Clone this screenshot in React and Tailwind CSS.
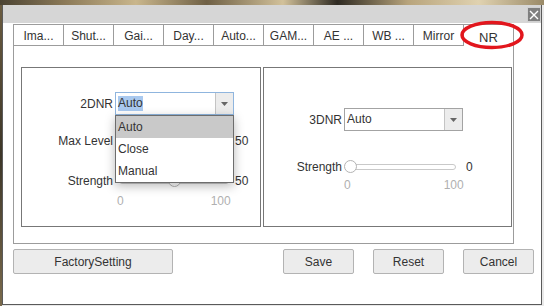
import React from "react"

const tabs = ["Ima...", "Shut...", "Gai...", "Day...", "Auto...", "GAM...", "AE ...", "WB ...", "Mirror"]

function Slider({ value, width = 114 }) {
  const pos = (value / 100) * (width - 12)
  return (
    <div className="relative h-[14px]" style={{ width }}>
      <div className="absolute left-[2px] right-[2px] top-[4px] h-[6px] rounded-full border border-[#c9c9c9] bg-white" />
      <div
        className="absolute top-0 h-[13px] w-[13px] rounded-full border border-[#b4b4b4] bg-white"
        style={{ left: pos }}
      />
    </div>
  )
}

function Select({ focused }) {
  return (
    <div
      className={
        "flex h-[23px] w-[119px] border bg-white " +
        (focused ? "border-[#8fb5de]" : "border-[#a3a3a3]")
      }
    >
      <div className="flex flex-1 items-center pl-[2px]">
        <span className={focused ? "bg-[#a9c9ef] leading-[15px]" : "leading-[15px]"}>Auto</span>
      </div>
      <div className="flex w-[18px] items-center justify-center border-l border-[#c4c4c4] bg-[#ececec]">
        <svg width="7" height="4" viewBox="0 0 7 4">
          <path d="M0 0h7L3.5 4z" fill="#666" />
        </svg>
      </div>
    </div>
  )
}

function Btn({ children, className }) {
  return (
    <div
      className={
        "flex h-[25px] items-center justify-center rounded-[2px] border border-[#b3b3b3] bg-[#ececec] text-[12px] text-[#333] " +
        className
      }
    >
      {children}
    </div>
  )
}

export default function App() {
  return (
    <div className="relative flex h-[306px] w-[544px] flex-col overflow-hidden bg-[#e9e9e9] font-['Liberation_Sans',Arial,sans-serif] text-[12px] text-[#333]">
      {/* background photo strip */}
      <div className="h-[5px] shrink-0 bg-[linear-gradient(90deg,#4b4333_0%,#8c7a58_12%,#c9b68c_25%,#6f6045_38%,#d2c19a_52%,#2e2a22_62%,#b8a47c_75%,#e0d2b0_88%,#9a8a68_100%)]" />
      <div className="flex flex-1">
        <div className="w-[2px] bg-[linear-gradient(180deg,#6b5c40,#3d3628_50%,#7a6a4c)]" />
        <div className="flex h-[300px] w-[540px] flex-col border-x border-b border-[#5a5a5a] bg-white">
          {/* title bar */}
          <div className="flex h-[18px] shrink-0 justify-end bg-[#d6d6d6]">
            <div className="mt-[2px] flex h-[15px] w-[14px] items-center justify-center border border-[#d0d0d0] bg-[#7f7f7f]">
              <svg width="10" height="10" viewBox="0 0 10 10">
                <path d="M1 1l8 8M9 1l-8 8" stroke="#fff" strokeWidth="1.4" />
              </svg>
            </div>
          </div>

          <div className="pl-[10px] pt-[1px]">
            {/* tabs */}
            <div className="flex h-[22px]">
              {tabs.map((t) => (
                <div
                  key={t}
                  className="flex w-[50px] items-center justify-center border-b border-l border-t border-[#9c9c9c] pt-[1px]"
                >
                  {t}
                </div>
              ))}
              <div className="flex w-[51px] items-center justify-center border-x border-t border-[#9c9c9c] pt-[5px] text-[13px]">
                NR
              </div>
            </div>

            {/* panel */}
            <div className="flex h-[198px] w-[501px] gap-[2px] border-x border-b border-[#9c9c9c] pl-[7px] pt-[21px]">
              {/* 2DNR box */}
              <div className="flex h-[160px] w-[240px] flex-col border border-[#777]">
                <div className="mt-[24px] flex items-center">
                  <div className="w-[91px] text-right">2DNR</div>
                  <div className="relative ml-[2px]">
                    <Select focused />
                    <div className="absolute left-0 top-full z-10 w-[119px] border border-[#6d6d6d] bg-white shadow-[0_3px_10px_rgba(0,0,0,0.28)]">
                      <div className="flex h-[22px] items-center bg-[#c9c9c9] pl-[2px]">Auto</div>
                      <div className="flex h-[22px] items-center pl-[2px]">Close</div>
                      <div className="flex h-[22px] items-center pl-[2px]">Manual</div>
                    </div>
                  </div>
                </div>
                <div className="mt-[16px] flex h-[20px] items-center">
                  <div className="w-[91px] text-right">Max Level</div>
                  <div className="ml-[4px]">
                    <Slider value={50} />
                  </div>
                  <div className="ml-[4px]">50</div>
                </div>
                <div className="mt-[20px] flex h-[20px] items-center">
                  <div className="w-[91px] text-right">Strength</div>
                  <div className="ml-[4px]">
                    <Slider value={50} />
                  </div>
                  <div className="ml-[4px]">50</div>
                </div>
                <div className="flex h-[20px] items-center pl-[95px] text-[#b0b0b0]">
                  <span>0</span>
                  <span className="ml-[87px]">100</span>
                </div>
              </div>

              {/* 3DNR box */}
              <div className="flex h-[160px] w-[249px] flex-col border border-[#777]">
                <div className="mt-[40px] flex items-center">
                  <div className="w-[78px] text-right">3DNR</div>
                  <div className="ml-[2px]">
                    <Select />
                  </div>
                </div>
                <div className="mt-[26px] flex h-[20px] items-center">
                  <div className="w-[78px] text-right">Strength</div>
                  <div className="ml-[2px]">
                    <Slider value={0} />
                  </div>
                  <div className="ml-[8px]">0</div>
                </div>
                <div className="flex h-[16px] items-center pl-[80px] text-[#b0b0b0]">
                  <span>0</span>
                  <span className="ml-[93px]">100</span>
                </div>
              </div>
            </div>
          </div>

          {/* buttons */}
          <div className="mt-[5px] flex pl-[10px] pr-[7px]">
            <Btn className="w-[160px]">FactorySetting</Btn>
            <Btn className="ml-auto w-[71px]">Save</Btn>
            <Btn className="ml-[19px] w-[71px]">Reset</Btn>
            <Btn className="ml-[19px] w-[71px]">Cancel</Btn>
          </div>
        </div>
      </div>

      {/* red annotation ellipse */}
      <svg className="pointer-events-none absolute left-[459px] top-[19px]" width="68" height="32" viewBox="0 0 68 32">
        <ellipse cx="33" cy="16" rx="30" ry="12.5" fill="none" stroke="#e2161d" strokeWidth="3.5" />
      </svg>
    </div>
  )
}
